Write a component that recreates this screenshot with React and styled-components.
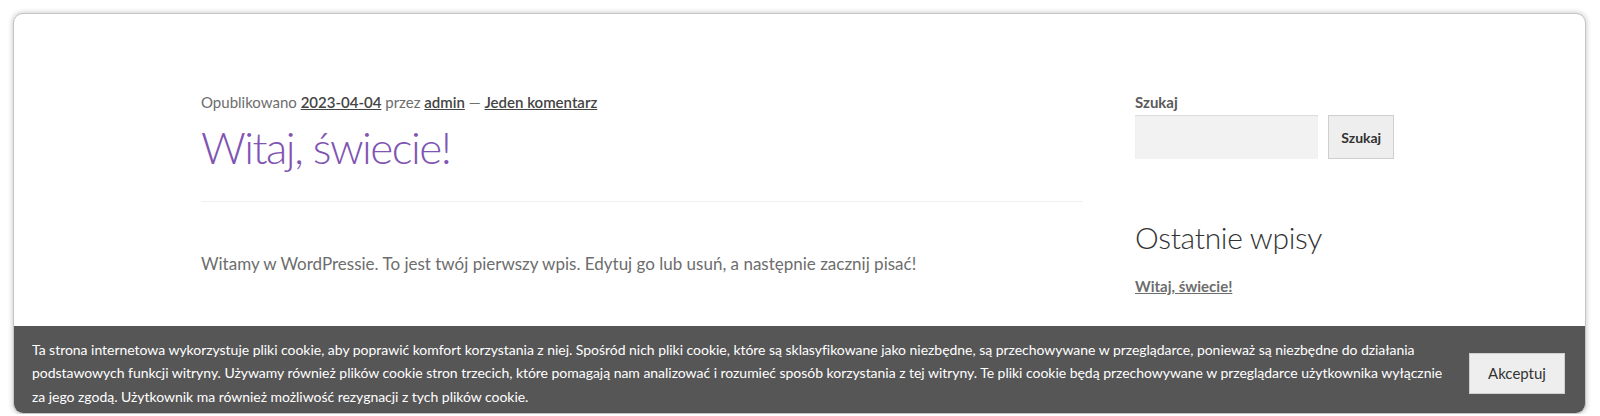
import React from 'react';
import styled, { createGlobalStyle } from 'styled-components';

const GlobalStyle = createGlobalStyle`
  html, body {
    margin: 0;
    padding: 0;
    background: #ffffff;
  }
  body {
    font-family: 'Lato', 'Liberation Sans', sans-serif;
    overflow: hidden;
  }
`;

const Frame = styled.div`
  position: relative;
  margin: 13px 0 0 13px;
  width: 1573px;
  height: 401px;
  box-sizing: border-box;
  border: 1px solid #c4c4c4;
  border-radius: 10px;
  box-shadow: 0 0 5px 1px rgba(0, 0, 0, 0.18);
  background: #fff;
  overflow: hidden;
`;

const Container = styled.div`
  width: 1193px;
  margin: 0 0 0 187px;
  padding-top: 78px;
  display: flex;
  justify-content: space-between;
`;

const Primary = styled.main`
  width: 882px;
`;

const Meta = styled.div`
  font-size: 15px;
  color: #6d6d6d;
  line-height: 20px;

  a {
    color: #444;
    font-weight: 600;
    text-decoration: underline;
  }
`;

const Title = styled.h1`
  margin: 5px 0 0;
  font-size: 44px;
  font-weight: 300;
  line-height: 60px;
  color: #7f54b3;
  letter-spacing: -1.5px;
`;

const Divider = styled.hr`
  margin: 24px 0 0;
  border: 0;
  border-top: 1px solid #f0f0f0;
`;

const Body = styled.p`
  margin: 49px 0 0;
  font-size: 17px;
  line-height: 26px;
  color: #6d6d6d;
`;

const Sidebar = styled.aside`
  width: 259px;
`;

const Label = styled.label`
  display: block;
  font-size: 15px;
  font-weight: 700;
  color: #5a5a5a;
  line-height: 20px;
`;

const SearchRow = styled.div`
  display: flex;
  gap: 10px;
  margin-top: 3px;
`;

const SearchInput = styled.input`
  width: 185px;
  height: 44px;
  box-sizing: border-box;
  border: 0;
  box-shadow: inset 0 1px 1px rgba(0, 0, 0, 0.1);
  background: #f2f2f2;
  outline: none;
`;

const Button = styled.button`
  height: ${(p) => p.$h}px;
  width: ${(p) => p.$w}px;
  box-sizing: border-box;
  background: #eeeeee;
  border: 1px solid #cfcfcf;
  color: #333;
  font-family: 'Lato', 'Liberation Sans', sans-serif;
  font-size: ${(p) => p.$fs}px;
  font-weight: ${(p) => p.$fw};
  cursor: pointer;
`;

const WidgetTitle = styled.h2`
  margin: 58px 0 0;
  font-size: 30px;
  font-weight: 300;
  line-height: 40px;
  color: #333;
  letter-spacing: -0.3px;
`;

const WidgetLink = styled.a`
  display: block;
  margin-top: 20px;
  font-size: 15px;
  font-weight: 700;
  color: #6d6d6d;
  text-decoration: underline;
`;

const CookieBar = styled.div`
  position: absolute;
  left: 0;
  right: 0;
  bottom: 0;
  height: 87px;
  background: #565656;
  display: flex;
  align-items: center;
  justify-content: space-between;
  padding: 7px 20px 0 18px;
  box-sizing: border-box;
`;

const CookieText = styled.p`
  margin: 0;
  color: #fff;
  font-size: 14px;
  line-height: 23.5px;
  white-space: nowrap;
  letter-spacing: -0.03px;
`;

export default function App() {
  return (
    <>
      <GlobalStyle />
      <Frame>
        <Container>
          <Primary>
            <Meta>
              Opublikowano <a href="#">2023-04-04</a> przez <a href="#">admin</a> — <a href="#">Jeden komentarz</a>
            </Meta>
            <Title>Witaj, świecie!</Title>
            <Divider />
            <Body>
              Witamy w WordPressie. To jest twój pierwszy wpis. Edytuj go lub usuń, a następnie zacznij pisać!
            </Body>
          </Primary>
          <Sidebar>
            <Label htmlFor="s">Szukaj</Label>
            <SearchRow>
              <SearchInput id="s" type="search" />
              <Button $w={66} $h={44} $fs={14} $fw={700}>Szukaj</Button>
            </SearchRow>
            <WidgetTitle>Ostatnie wpisy</WidgetTitle>
            <WidgetLink href="#">Witaj, świecie!</WidgetLink>
          </Sidebar>
        </Container>
        <CookieBar>
          <CookieText>
            Ta strona internetowa wykorzystuje pliki cookie, aby poprawić komfort korzystania z niej. Spośród nich pliki cookie, które są sklasyfikowane jako niezbędne, są przechowywane w przeglądarce, ponieważ są niezbędne do działania
            <br />
            podstawowych funkcji witryny. Używamy również plików cookie stron trzecich, które pomagają nam analizować i rozumieć sposób korzystania z tej witryny. Te pliki cookie będą przechowywane w przeglądarce użytkownika wyłącznie
            <br />
            za jego zgodą. Użytkownik ma również możliwość rezygnacji z tych plików cookie.
          </CookieText>
          <Button $w={96} $h={41} $fs={15} $fw={400}>Akceptuj</Button>
        </CookieBar>
      </Frame>
    </>
  );
}
